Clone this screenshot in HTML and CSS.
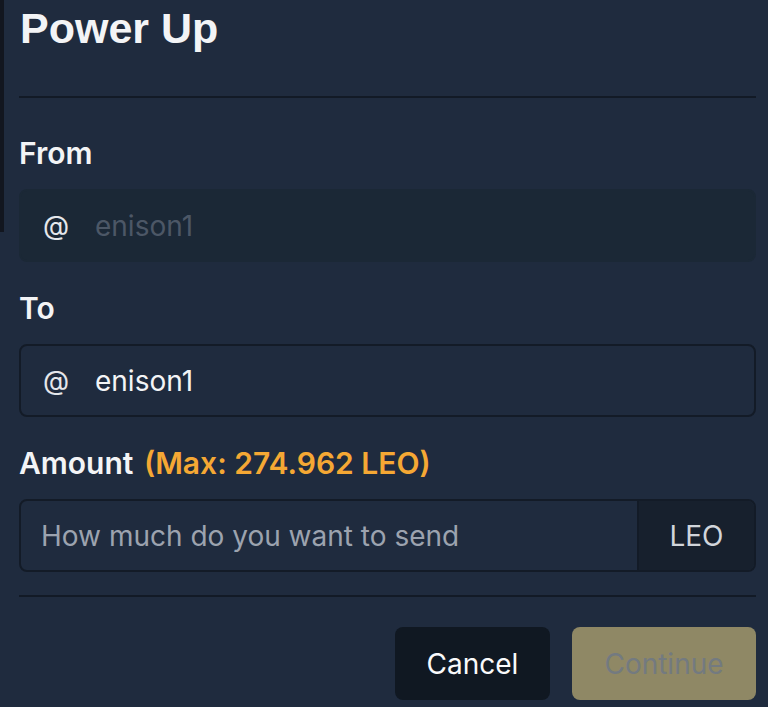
FILE: index.html
```html
<!DOCTYPE html>
<html lang="en">
<head>
<meta charset="utf-8">
<title>Power Up</title>
<link rel="stylesheet" href="styles.css">
</head>
<body>
<div class="edge"></div>
<main class="modal">
  <h1 class="title">Power Up</h1>
  <hr class="divider">
  <label class="label first">From</label>
  <div class="field disabled">
    <span class="at">@</span>
    <span class="value muted">enison1</span>
  </div>
  <label class="label">To</label>
  <div class="field">
    <span class="at">@</span>
    <span class="value">enison1</span>
  </div>
  <label class="label">Amount <span class="max">(Max: 274.962 LEO)</span></label>
  <div class="field group">
    <span class="placeholder">How much do you want to send</span>
    <span class="addon">LEO</span>
  </div>
  <hr class="divider bottom">
  <div class="actions">
    <button class="btn cancel">Cancel</button>
    <button class="btn continue">Continue</button>
  </div>
</main>
</body>
</html>
```
FILE: styles.css
```css
* { box-sizing: border-box; }
html, body {
  margin: 0;
  height: 100%;
  background: #1f2b3e;
  overflow: hidden;
}
body {
  font-family: Inter, "Liberation Sans", sans-serif;
  color: #f3f4f6;
  position: relative;
}
.edge {
  position: absolute;
  left: 0;
  top: 0;
  width: 4px;
  height: 232px;
  background: #12161f;
}
.modal {
  display: flex;
  flex-direction: column;
  padding: 0 12px 0 19px;
}
.title {
  margin: 0;
  font-family: "Liberation Sans", Arial, sans-serif;
  font-weight: 700;
  font-size: 43px;
  line-height: 56px;
  padding-left: 1px;
  color: #f3f4f6;
}
.divider {
  margin: 40px 0 0;
  border: 0;
  height: 2px;
  background: #121a26;
}
.divider.bottom { margin-top: 23px; }
.label {
  margin-top: 30px;
  font-size: 30px;
  font-weight: 600;
  line-height: 32px;
  color: #f3f4f6;
}
.label.first { margin-top: 39px; }
.max { color: #f5a834; margin-left: 3px; }
.field {
  margin-top: 20px;
  height: 73px;
  border: 2px solid #131b27;
  border-radius: 8px;
  display: flex;
  align-items: center;
  padding: 0 22px;
  font-size: 28px;
}
.field.disabled {
  background: #1b2836;
  border-color: #1b2836;
}
.at {
  width: 52px;
  color: #e5e7eb;
  font-size: 27px;
}
.value { color: #f3f4f6; }
.value.muted { color: #4c5766; }
.field.group {
  padding: 0;
  overflow: hidden;
}
.placeholder {
  flex: 1;
  padding-left: 20px;
  color: #9ca3af;
}
.addon {
  width: 117px;
  align-self: stretch;
  display: flex;
  align-items: center;
  justify-content: center;
  background: #17202d;
  border-left: 2px solid #131b27;
  color: #d1d5db;
}
.actions {
  margin-top: 30px;
  display: flex;
  justify-content: flex-end;
  gap: 22px;
}
.btn {
  height: 73px;
  border: 0;
  border-radius: 8px;
  font-family: Inter, "Liberation Sans", sans-serif;
  font-size: 28px;
}
.cancel {
  width: 155px;
  background: #101822;
  color: #f9fafb;
}
.continue {
  width: 184px;
  background: #8f8865;
  color: #737a80;
}
```
